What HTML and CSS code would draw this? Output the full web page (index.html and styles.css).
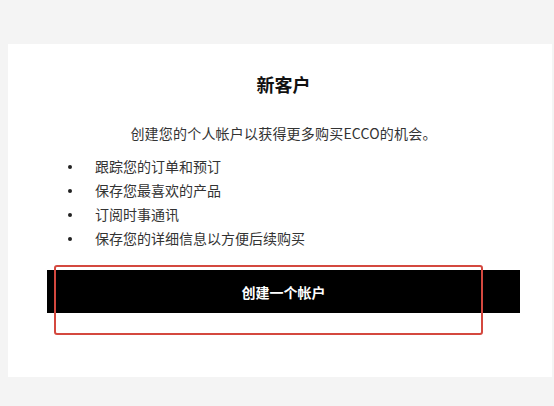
FILE: index.html
```html
<!DOCTYPE html>
<html lang="zh-CN">

<head>
    <meta charset="UTF-8">
    <meta name="viewport" content="width=device-width, initial-scale=1.0">
    <title>新客户 - ECCO</title>
    <link rel="stylesheet" href="styles.css">
</head>

<body>
    <div class="page">
        <div class="card">
            <h2 class="title">新客户</h2>
            <p class="intro">创建您的个人帐户以获得更多购买ECCO的机会。</p>
            <ul class="benefits">
                <li>跟踪您的订单和预订</li>
                <li>保存您最喜欢的产品</li>
                <li>订阅时事通讯</li>
                <li>保存您的详细信息以方便后续购买</li>
            </ul>
            <button class="create-btn" type="button">创建一个帐户</button>
            <div class="highlight"></div>
        </div>
    </div>
</body>

</html>
```

FILE: styles.css
```css
body {
    margin: 0;
    padding: 0;
    background-color: #f4f4f4;
    font-family: "Microsoft YaHei", "Noto Sans CJK SC", "Liberation Sans", sans-serif;
    color: #333;
}

.page {
    padding: 44px 2px 29px 8px;
}

.card {
    position: relative;
    background-color: #fff;
    padding: 29px 32px 64px 39px;
}

.title {
    margin: 0;
    font-size: 18px;
    line-height: 22px;
    font-weight: bold;
    color: #111;
    text-align: center;
}

.intro {
    margin: 28px 0 0;
    font-size: 14px;
    line-height: 20px;
    letter-spacing: 0.2px;
    text-align: center;
}

.benefits {
    list-style-type: none;
    margin: 11px 0 0;
    padding: 0;
}

.benefits li {
    display: flex;
    align-items: center;
    font-size: 14px;
    line-height: 24px;
}

.benefits li::before {
    content: "";
    flex: 0 0 auto;
    width: 4px;
    height: 4px;
    margin: 1px 23px 0 21px;
    border-radius: 50%;
    background-color: #222;
}

.create-btn {
    display: block;
    width: 100%;
    height: 43px;
    margin-top: 20px;
    border: none;
    background-color: #000;
    color: #fff;
    font-family: inherit;
    font-size: 14px;
    font-weight: bold;
    cursor: pointer;
}

/* red annotation box drawn over the button */
.highlight {
    position: absolute;
    left: 46px;
    top: 221px;
    width: 429px;
    height: 70px;
    box-sizing: border-box;
    border: 2px solid #d4483f;
    border-radius: 3px;
    pointer-events: none;
}
```
